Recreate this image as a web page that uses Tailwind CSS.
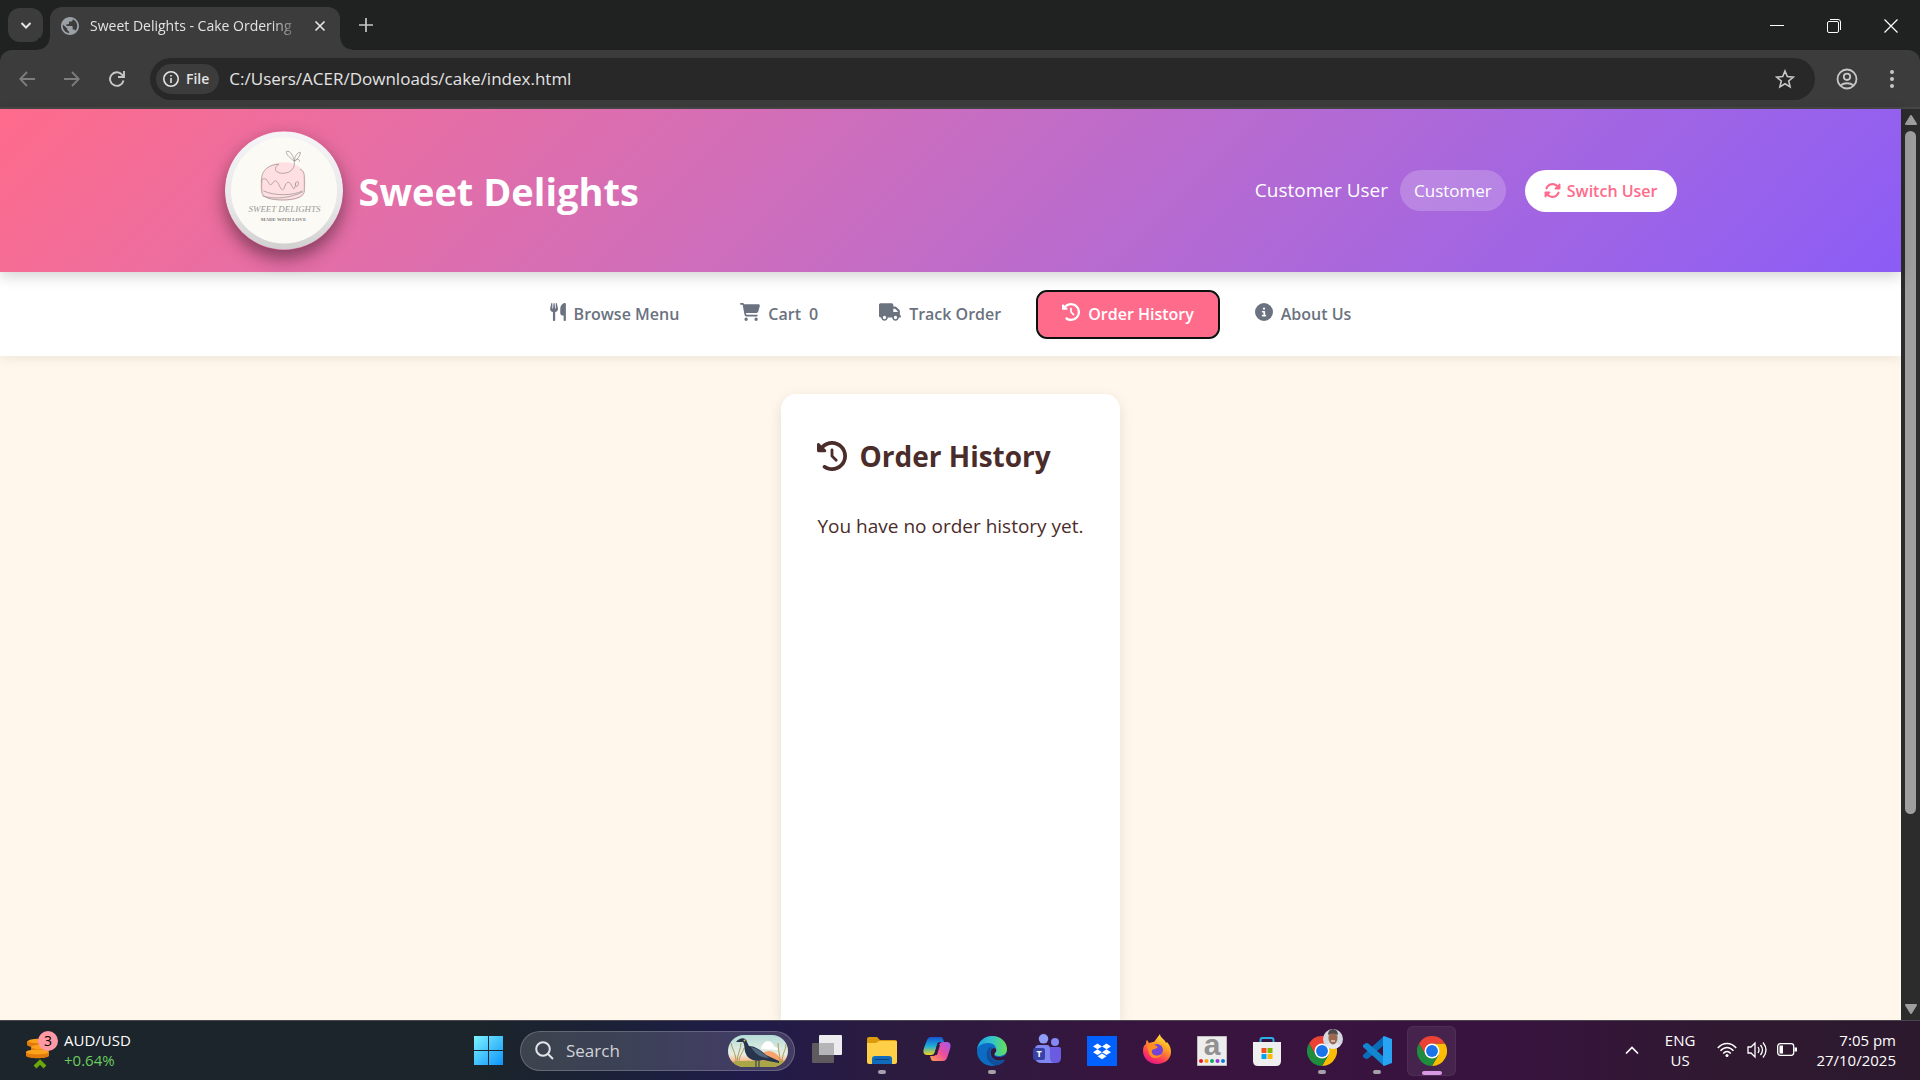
<!DOCTYPE html>
<html lang="en">
<head>
<meta charset="utf-8">
<title>Sweet Delights - Cake Ordering</title>
<script src="https://cdn.jsdelivr.net/npm/@tailwindcss/browser@4"></script>
</head>
<body class="flex h-screen flex-col overflow-hidden bg-[#202221] font-['Segoe_UI','Open_Sans',sans-serif] text-white">

<svg class="hidden" aria-hidden="true">
  <symbol id="history" viewBox="0 0 512 512"><path fill="currentColor" d="M75 75L41 41C25.9 25.9 0 36.6 0 57.9V168c0 13.3 10.7 24 24 24H134.1c21.4 0 32.1-25.9 17-41l-30.8-30.8C155 85.5 203 64 256 64c106 0 192 86 192 192s-86 192-192 192c-40.8 0-78.6-12.7-109.7-34.4c-14.5-10.1-34.4-6.6-44.6 7.9s-6.6 34.4 7.9 44.6C151.2 495 201.7 512 256 512c141.4 0 256-114.6 256-256S397.4 0 256 0C185.3 0 121.3 28.7 75 75zm181 53c-13.3 0-24 10.7-24 24V256c0 6.4 2.5 12.5 7 17l72 72c9.4 9.4 24.6 9.4 33.9 0s9.4-24.6 0-33.9l-65-65V152c0-13.3-10.7-24-24-24z"/></symbol>
  <symbol id="chrome" viewBox="0 0 48 48">
    <path fill="#fbbc04" d="M24 12H44.8A24 24 0 0 1 24 48L34.4 30z"/>
    <path fill="#ea4335" d="M3.2 12A24 24 0 0 1 44.8 12H24L13.6 30z"/>
    <path fill="#1e8e3e" d="M3.2 12L13.6 30L24 36L34.4 30L24 48A24 24 0 0 1 3.2 12z"/>
    <circle cx="24" cy="24" r="12" fill="#fff"/><circle cx="24" cy="24" r="9.5" fill="#1a73e8"/>
  </symbol>
</svg>

<!-- Tab strip -->
<div class="flex h-[50px] shrink-0 items-end pl-2">
  <button class="mb-2 flex h-[34px] w-[35px] items-center justify-center rounded-xl bg-[#3c3c3c]" aria-label="Search tabs">
    <svg class="size-3" viewBox="0 0 12 12" fill="none" stroke="#e3e3e3" stroke-width="2"><path d="M1.5 4L6 8.5L10.5 4"/></svg>
  </button>
  <div class="relative ml-[7px] flex h-[43px] w-[290px] items-center rounded-t-xl bg-[#3c3c3c] pb-1.5 pl-[11px] pr-2.5">
    <span class="absolute bottom-0 -left-3 size-3 bg-radial-[at_0_0] from-[#202221] from-[11px] to-[#3c3c3c] to-[12px]"></span>
    <span class="absolute bottom-0 -right-3 size-3 bg-radial-[at_100%_0] from-[#202221] from-[11px] to-[#3c3c3c] to-[12px]"></span>
    <svg class="size-[18px] shrink-0" viewBox="2 2 20 20"><path fill="#9aa0a6" d="M12 2C6.48 2 2 6.48 2 12s4.48 10 10 10 10-4.48 10-10S17.52 2 12 2zm-1 17.93c-3.95-.49-7-3.85-7-7.93 0-.62.08-1.21.21-1.79L9 15v1c0 1.1.9 2 2 2v1.93zm6.9-2.54c-.26-.81-1-1.39-1.9-1.39h-1v-3c0-.55-.45-1-1-1H8v-2h2c.55 0 1-.45 1-1V7h2c1.1 0 2-.9 2-2v-.41c2.93 1.19 5 4.06 5 7.41 0 2.08-.8 3.97-2.1 5.39z"/></svg>
    <span class="ml-[11px] whitespace-nowrap mask-r-from-90% mask-r-to-105% text-[14px] text-[#e3e3e3]">Sweet Delights - Cake Ordering</span>
    <button class="ml-auto p-1" aria-label="Close tab"><svg class="size-3" viewBox="0 0 12 12" stroke="#e3e3e3" stroke-width="1.7"><path d="M1.5 1.5l9 9M10.5 1.5l-9 9"/></svg></button>
  </div>
  <button class="mb-[18px] ml-[19px]" aria-label="New tab"><svg class="size-3.5" viewBox="0 0 14 14" stroke="#c7c7c7" stroke-width="1.7"><path d="M7 0v14M0 7h14"/></svg></button>
  <div class="ml-auto flex h-12 items-center">
    <button class="flex w-[58px] justify-center" aria-label="Minimize"><svg class="size-3.5" viewBox="0 0 14 14" stroke="#fff"><path d="M0 6.5h14"/></svg></button>
    <button class="flex w-[56px] justify-center" aria-label="Restore"><svg class="size-3.5" viewBox="0 0 14 14" fill="none" stroke="#fff"><rect x=".5" y="2.500" width="11" height="11" rx="1.500"/><path d="M3 .5h8a2.500 2.500 0 0 1 2.500 2.500v8"/></svg></button>
    <button class="flex w-[58px] justify-center" aria-label="Close"><svg class="size-3.5" viewBox="0 0 14 14" stroke="#fff" stroke-width="1.2"><path d="M.5.5l13 13M13.500.5l-13 13"/></svg></button>
  </div>
</div>

<!-- Toolbar -->
<div class="flex h-[59px] shrink-0 items-center rounded-t-xl border-b-2 border-[#474747] bg-[#3c3c3c] px-[19px]">
  <button aria-label="Back"><svg class="size-4" viewBox="0 0 16 16" fill="none" stroke="#7d7d7d" stroke-width="1.8"><path d="M16 8H1.5M8 1L1.200 8L8 15"/></svg></button>
  <button class="ml-[29px]" aria-label="Forward"><svg class="size-4" viewBox="0 0 16 16" fill="none" stroke="#7d7d7d" stroke-width="1.8"><path d="M0 8h14.500M8 1l6.800 7L8 15"/></svg></button>
  <button class="ml-[29px]" aria-label="Reload"><svg class="size-4" viewBox="0 0 16 16" fill="none" stroke="#c7c7c7" stroke-width="1.9"><path d="M14.500 9.500A6.800 6.800 0 1 1 13 3.600L14.800 5.500M15 0v6H9"/></svg></button>
  <div class="ml-[25px] flex h-[42px] flex-1 items-center rounded-full bg-[#282828] pl-1.5 pr-5">
    <button class="flex h-[30px] items-center gap-[7px] rounded-full bg-[#3c3c3c] pl-[7px] pr-2.5 text-[14px] font-semibold text-[#e3e3e3]">
      <svg class="size-4" viewBox="0 0 16 16" fill="none" stroke="#e3e3e3" stroke-width="1.6"><circle cx="8" cy="8" r="7.200"/><path d="M8 7v5M8 4v1.600"/></svg>File
    </button>
    <input class="ml-2.5 min-w-0 flex-1 bg-transparent text-[17px] text-[#e3e3e3] outline-none" aria-label="Address" value="C:/Users/ACER/Downloads/cake/index.html">
    <button aria-label="Bookmark"><svg class="size-5" viewBox="0 0 20 20" fill="none" stroke="#c7c7c7" stroke-width="1.6"><path d="M10 2l2.300 5.600 6 .5-4.600 3.900 1.400 5.900L10 14.800l-5.100 3.100 1.400-5.900L1.700 8.100l6-.5z"/></svg></button>
  </div>
  <button class="ml-[21px]" aria-label="Profile"><svg class="size-[22px]" viewBox="0 0 22 22" fill="none" stroke="#c7c7c7" stroke-width="1.8"><circle cx="11" cy="11" r="9.500"/><circle cx="11" cy="8.800" r="3.200"/><path d="M4.500 17.500c3.500-3 9.500-3 13 0"/></svg></button>
  <button class="ml-[25px]" aria-label="Menu"><svg class="h-5 w-[18px]" viewBox="0 0 18 20" fill="#c7c7c7"><circle cx="9" cy="3" r="2"/><circle cx="9" cy="10" r="2"/><circle cx="9" cy="17" r="2"/></svg></button>
</div>

<!-- Page -->
<div class="flex min-h-0 flex-1">
  <div class="flex min-w-0 flex-1 flex-col bg-[#fff6ec] text-[#4a2c2a]">
    <header class="relative z-10 bg-linear-135 from-[#ff6b8b] to-[#8b5cf6] px-6 py-[22px] shadow-[0_4px_14px_rgba(0,0,0,0.18)]">
      <div class="mx-auto flex max-w-[1452px] items-center text-white">
        <svg class="h-[119px] w-[118px] rounded-full shadow-[0_8px_18px_rgba(0,0,0,0.45)]" viewBox="0 0 119 119" role="img" aria-label="Sweet Delights logo">
          <defs><linearGradient id="rim" x1="0" y1="0" x2="0" y2="1"><stop offset="0" stop-color="#f5f5f7"/><stop offset=".6" stop-color="#e8e8ea"/><stop offset="1" stop-color="#d0d0d0"/></linearGradient></defs>
          <circle cx="59.5" cy="59.5" r="59.5" fill="url(#rim)"/>
          <circle cx="59.5" cy="59.5" r="53.5" fill="#fbfaf5"/>
          <path fill="#ffdfe2" d="M38 43c2-8 12-12 22-12 12 0 20 7 21 16 1 6 0 12-2 17-4 7-30 8-40 1-5-6-4-15-1-22z"/>
          <g fill="none" stroke="#a39797" stroke-width=".8" stroke-linecap="round">
            <path d="M54 33c-9 0-17 6-17 14v13c0 7 9 9 21 9s22-3 22-9V46c0-4-1-7-4-8M39 60c10 5 30 5 39 0M38 65c11 4 29 2 40-4"/>
            <path d="M37 51c-2-3 4-5 6-1s3 5 5 2 4-3 6 1 4 9 6 3 5-6 7-2 3 6 4 0c0-4 4-5 3-1s-3 3-3-1"/>
            <path d="M54 33c-5 3-4 8 2 9 8 1 15-3 14-12M70 30c-4-3-9-7-8-10 4-1 7 5 8 10 0-5 3-9 6-9 0 3-2 6-6 9 3-3 6-2 5 0"/>
          </g>
          <text x="60" y="81" text-anchor="middle" class="fill-[#9a9a9a] font-['Liberation_Serif',serif] text-[9px] italic">SWEET DELIGHTS</text>
          <text x="59" y="90" text-anchor="middle" class="fill-[#808080] font-['Liberation_Serif',serif] text-[5px] font-bold">MADE WITH LOVE</text>
        </svg>
        <h1 class="ml-4 text-[38px] leading-none font-bold">Sweet Delights</h1>
        <div class="ml-auto flex items-center">
          <span class="text-[19px]">Customer User</span>
          <span class="ml-3 flex h-[41px] items-center rounded-full bg-white/20 px-3.5 text-[17px]">Customer</span>
          <button class="ml-[19px] flex h-[42px] items-center gap-1.5 rounded-full bg-white px-[19px] text-[16px] font-semibold text-[#ff6b8b]">
            <svg class="size-[17px]" viewBox="0 0 512 512" fill="currentColor"><path d="M142.900 142.900c62.200-62.200 162.700-62.500 225.300-1L327 183c-6.900 6.900-8.900 17.200-5.200 26.200s12.500 14.800 22.200 14.800H472c13.300 0 24-10.700 24-24V72c0-9.700-5.800-18.500-14.800-22.200s-19.300-1.700-26.200 5.200L413.400 96.600c-87.600-86.500-228.700-86.200-315.800 1C73.200 122 55.600 150.700 44.800 181.400c-5.900 16.700 2.900 34.900 19.500 40.800s34.900-2.900 40.800-19.500c7.700-21.800 20.200-42.300 37.800-59.800zM16 312V440c0 9.700 5.800 18.500 14.800 22.200s19.300 1.700 26.200-5.200l41.600-41.600c87.600 86.500 228.700 86.200 315.800-1c24.400-24.400 42.100-53.100 52.900-83.700c5.900-16.700-2.900-34.900-19.500-40.800s-34.900 2.900-40.800 19.500c-7.700 21.800-20.200 42.300-37.800 59.800c-62.200 62.200-162.700 62.500-225.300 1L185 329c6.900-6.900 8.900-17.200 5.200-26.200s-12.500-14.800-22.200-14.800H40c-13.300 0-24 10.700-24 24z"/></svg>
            Switch User
          </button>
        </div>
      </div>
    </header>

    <nav class="flex h-[84px] shrink-0 items-center justify-center gap-[13px] bg-white text-[16px] font-semibold text-[#6b7280] shadow-[0_2px_12px_rgba(0,0,0,0.08)]">
      <button class="flex h-[45px] items-center gap-2 px-6">
        <svg class="mb-1 h-[18px] w-4" viewBox="0 0 448 512" fill="currentColor"><path d="M416 0C400 0 288 32 288 176V288c0 35.300 28.700 64 64 64h32V480c0 17.700 14.300 32 32 32s32-14.300 32-32V32c0-17.700-14.300-32-32-32zM64 16C64 7.800 57.900 1 49.700 .1S34.200 4.600 32.400 12.500L2.100 148.800C.7 155.100 0 161.500 0 167.900c0 45.900 35.100 83.600 80 87.700V480c0 17.700 14.300 32 32 32s32-14.300 32-32V255.600c44.900-4.100 80-41.800 80-87.700c0-6.400-.7-12.800-2.100-19.100L191.600 12.500c-1.800-8-9.300-13.300-17.400-12.400S160 7.800 160 16V150.200c0 5.400-4.400 9.800-9.800 9.800c-5.100 0-9.300-3.900-9.800-9L127.900 14.600C127.200 6.300 120.300 0 112 0s-15.200 6.300-15.900 14.600L83.700 151c-.5 5.100-4.700 9-9.800 9c-5.400 0-9.800-4.400-9.800-9.800V16z"/></svg>
        Browse Menu
      </button>
      <button class="flex h-[45px] items-center gap-2 px-6">
        <svg class="mb-1 h-[18px] w-5" viewBox="0 0 576 512" fill="currentColor"><path d="M0 24C0 10.700 10.700 0 24 0H69.500c22 0 41.500 12.800 50.600 32h411c26.300 0 45.500 25 38.600 50.400l-41 152.300c-8.500 31.400-37 53.300-69.500 53.300H170.700l5.400 28.500c2.200 11.300 12.100 19.500 23.600 19.500H488c13.300 0 24 10.700 24 24s-10.700 24-24 24H199.700c-34.600 0-64.300-24.600-70.700-58.500L77.400 54.500c-.7-3.800-4-6.500-7.900-6.500H24C10.700 48 0 37.300 0 24zM128 464a48 48 0 1 1 96 0 48 48 0 1 1 -96 0zm336-48a48 48 0 1 1 0 96 48 48 0 1 1 0-96z"/></svg>
        Cart <span>0</span>
      </button>
      <button class="flex h-[45px] items-center gap-2 px-6">
        <svg class="mb-1 h-[18px] w-[22px]" viewBox="0 0 640 512" fill="currentColor"><path d="M48 0C21.500 0 0 21.500 0 48V368c0 26.500 21.500 48 48 48H64c0 53 43 96 96 96s96-43 96-96H384c0 53 43 96 96 96s96-43 96-96h32c17.700 0 32-14.300 32-32s-14.300-32-32-32V237.300c0-17-6.700-33.300-18.700-45.300L512 114.700c-12-12-28.300-18.700-45.300-18.700H416V48c0-26.500-21.500-48-48-48H48zM416 160h50.700L544 237.300V256H416V160zM112 416a48 48 0 1 1 96 0 48 48 0 1 1 -96 0zm368-48a48 48 0 1 1 0 96 48 48 0 1 1 0-96z"/></svg>
        Track Order
      </button>
      <button class="flex h-[45px] items-center gap-2 rounded-[9px] bg-[#ff6b8b] px-6 text-white outline-2 outline-[#101010]">
        <svg class="mb-1 size-[18px]"><use href="#history"/></svg>
        Order History
      </button>
      <button class="flex h-[45px] items-center gap-2 px-6">
        <svg class="mb-1 size-[18px]" viewBox="0 0 512 512" fill="currentColor"><path d="M256 512A256 256 0 1 0 256 0a256 256 0 1 0 0 512zM216 336h24V272H216c-13.300 0-24-10.700-24-24s10.700-24 24-24h48c13.300 0 24 10.700 24 24v88h8c13.300 0 24 10.700 24 24s-10.700 24-24 24H216c-13.300 0-24-10.700-24-24s10.700-24 24-24zm40-208a32 32 0 1 1 0 64 32 32 0 1 1 0-64z"/></svg>
        About Us
      </button>
    </nav>

    <main class="flex min-h-0 flex-1 justify-center pt-[38px]">
      <section class="rounded-t-[15px] bg-white px-9 pt-[38px] shadow-[0_4px_14px_rgba(0,0,0,0.1)]">
        <h2 class="flex h-12 items-center gap-3 text-[28px] font-bold"><svg class="size-[30px]"><use href="#history"/></svg>Order History</h2>
        <p class="mt-8 text-[19px]">You have no order history yet.</p>
      </section>
    </main>
  </div>
  <!-- Scroll bar -->
  <div class="flex w-[19px] shrink-0 flex-col items-center bg-[#2c2c2c] py-1.5">
    <svg class="h-2.5 w-3" viewBox="0 0 12 10" fill="#9f9f9f" stroke="#9f9f9f" stroke-linejoin="round" stroke-width="2"><path d="M6 1l5 8H1z"/></svg>
    <div class="mt-1.5 mb-2 min-h-0 flex-1"><div class="h-[79%] w-[11px] rounded-full bg-[#9f9f9f]"></div></div>
    <svg class="h-2.5 w-3" viewBox="0 0 12 10" fill="#9f9f9f" stroke="#9f9f9f" stroke-linejoin="round" stroke-width="2"><path d="M6 9l5-8H1z"/></svg>
  </div>
</div>

<!-- Taskbar -->
<footer class="grid h-[60px] shrink-0 grid-cols-[1fr_auto_1fr] items-center border-t border-[#4b4750] bg-[linear-gradient(to_right,#1b252b_0%,#1b252b_25%,#1b2138_32%,#201b4a_39%,#2c1b3e_47%,#38143f_60%,#38133f_78%,#2f1930_90%,#2c192e_100%)]">
  <button class="flex items-center gap-1.5 justify-self-start pb-0.5 pl-[26px] text-left">
    <svg class="h-[38px] w-8" viewBox="0 0 32 38" role="img" aria-label="3 alerts">
      <g fill="#e07a0a"><path d="M1 10v4c2 3 15 3 20 0v-4z"/><path d="M5 16v4c2 3 15 3 18 0v-4z"/><path d="M0 21v4c2 3 21 3 23 0v-4z"/></g>
      <g fill="#fba11b"><ellipse cx="12" cy="10" rx="10" ry="2.200"/><ellipse cx="14" cy="16" rx="9" ry="2.200"/><ellipse cx="11.500" cy="21" rx="11.500" ry="2.500"/></g>
      <path d="M9 36l5-5 5 5" fill="none" stroke="#6aa80e" stroke-width="4"/>
      <circle cx="22" cy="10" r="10" fill="#ff99a4"/><text x="22" y="15" text-anchor="middle" class="fill-black text-[14px]">3</text>
    </svg>
    <span class="text-[15px] leading-5">AUD/USD<br><span class="text-[#6ccb5f]">+0.64%</span></span>
  </button>

  <div class="flex h-full items-center">
    <button class="flex w-[55px] justify-center" aria-label="Start"><svg class="size-[29px]" viewBox="0 0 29 29"><defs><linearGradient id="win" x1="0" y1="0" x2="1" y2="1"><stop stop-color="#7df3ff"/><stop offset="1" stop-color="#0c93fb"/></linearGradient></defs><path fill="url(#win)" d="M0 0h14v14H0zM15 0h14v14H15zM0 15h14v14H0zM15 15h14v14H15z"/></svg></button>
    <label class="mx-1 flex h-10 w-[275px] items-center rounded-full border border-white/20 bg-white/15 pl-3.5 pr-1.5">
      <svg class="size-[19px]" viewBox="0 0 19 19" fill="none" stroke="#e4e4e8" stroke-width="2"><circle cx="8" cy="8" r="6.800"/><path d="M13 13l5 5"/></svg>
      <input class="ml-3 w-0 min-w-0 flex-1 bg-transparent text-[17px] outline-none placeholder:text-[#d2d2d8]" placeholder="Search" aria-label="Search">
      <svg class="h-8 w-[60px] rounded-[16px]" viewBox="0 0 60 32">
        <defs><linearGradient id="sky" x1="0" y1="0" x2="0" y2="1"><stop stop-color="#b5dcd8"/><stop offset=".6" stop-color="#e8eee4"/><stop offset=".85" stop-color="#ffb080"/></linearGradient></defs>
        <rect width="60" height="32" fill="url(#sky)"/><path fill="#fff" d="M33 14c0-4 4-8 7-8s5 3 6 5 5 1 6 4z"/><path fill="#f8a36c" d="M34 19c6-6 14-2 18 4l6 4H30z"/>
        <path fill="#aaa546" d="M0 27c15-2 40-1 60-1v6H0z"/>
        <g fill="none" stroke="#a99c58" stroke-width="1"><path d="M8 27C8 18 4 14 3 8M9 27c0-8 4-12 4-19M11 27c0-7 4-9 5-14M52 27c0-8-2-12-2-19M54 27c0-8 4-12 4-18"/></g>
        <path fill="#26354c" d="M8 7c4-5 10-5 11 0l2 4c6 0 13 5 17 9l13 6v2l-16-3c-9 2-15-1-17-6-2-4-1-9-3-12z"/>
        <path fill="#4f667d" d="M23 12c7 1 12 6 18 11-8 0-14-4-18-11z"/><path d="M28 24v8M31 24v8" stroke="#26354c"/><circle cx="16.500" cy="5.500" r=".9" fill="#e6b73c"/>
      </svg>
    </label>
    <button class="flex w-[55px] justify-center pb-1" aria-label="Task view"><svg class="h-7 w-[30px]" viewBox="0 0 30 28"><rect y="8" width="22" height="20" rx="1" fill="#5d5b60"/><rect x="7" width="23" height="20" rx="1" fill="#ececee"/><path fill="#b5b5b7" d="M7 8h15v12H7z"/></svg></button>
    <button class="relative flex h-full w-[55px] items-center justify-center" aria-label="File Explorer"><svg class="h-[27px] w-[30px]" viewBox="0 0 30 27"><path fill="#dc9b0c" d="M0 2q0-2 2-2h8l3 3h15q2 0 2 2v6H0z"/><path fill="#ffcf48" d="M0 6h9l3-2h17q1 0 1 1v20q0 2-2 2H2q-2 0-2-2z"/><path fill="#0f6cbd" d="M5 27v-5q0-3 3-3h14q3 0 3 3v5z"/><path stroke="#073f7c" d="M8 22.500h14"/></svg><i class="absolute bottom-1.5 h-1 w-2 rounded-full bg-[#a5a0aa]"></i></button>
    <button class="flex w-[55px] justify-center pb-1" aria-label="Copilot"><svg class="size-7" viewBox="0 0 28 28"><defs><linearGradient id="cpa" x1="0" y1="0" x2="0" y2="1"><stop stop-color="#1555d4"/><stop offset=".5" stop-color="#1cabd8"/><stop offset="1" stop-color="#f3d21c"/></linearGradient><linearGradient id="cpb" x1="1" y1="0" x2="0" y2="1"><stop stop-color="#a05af0"/><stop offset=".5" stop-color="#ee4c9c"/><stop offset="1" stop-color="#ffa04d"/></linearGradient></defs><path fill="url(#cpa)" d="M8 2h9c3 0 3 2 4 5h-4c-2 0-3 1-3 3l-2 7c-1 2-2 3-4 3H4c-4 0-4-4-3-7l3-8c1-2 2-3 4-3z"/><path fill="url(#cpb)" d="M20 26h-9c-3 0-3-2-4-5h3c2 0 3-1 4-3l2-8c1-2 2-3 4-3h4c4 0 4 4 3 7l-3 9c-1 2-2 3-4 3z"/><path fill="#301a40" d="M14 10h3l-3 10h-3z"/></svg></button>
    <button class="relative flex h-full w-[55px] items-center justify-center" aria-label="Edge"><svg class="size-[30px]" viewBox="0 0 30 30"><defs><linearGradient id="ed" x1="0" y1="0" x2="1" y2="0"><stop stop-color="#1ca2e2"/><stop offset=".5" stop-color="#34c4cc"/><stop offset="1" stop-color="#68e04f"/></linearGradient></defs><circle cx="15" cy="15" r="15" fill="#0c6cc4"/><path fill="url(#ed)" d="M0 14C1 5 8 0 15 0c9 0 15 6 15 13 0 5-4 7-8 7-3 0-5-1-5-2s2-2 2-5c0-4-4-6-8-6-6 0-10 3-11 7z"/><path fill="#114f9c" d="M13 11c-6 5-4 15 4 18 5 1 9-1 11-5-7 3-14 0-15-5-1-3 0-6 3-7z"/><path fill="#341741" d="M17 12c4 1 2 4 1 5-2 3 1 4 4 4 4 0 7-2 8-5v6c-7 5-15 2-16-3-1-4 0-6 3-7z"/></svg><i class="absolute bottom-1.5 h-1 w-2 rounded-full bg-[#a5a0aa]"></i></button>
    <button class="flex w-[55px] justify-center pb-1" aria-label="Teams"><svg class="h-[30px] w-7" viewBox="0 0 28 30"><circle cx="22" cy="8" r="4" fill="#8489f5"/><circle cx="10.500" cy="4.800" r="4.800" fill="#8e9df8"/><path fill="#6a5be0" d="M17 13h9q2 0 2 2v9q0 5-5 5h-7z"/><path fill="#7f86f2" d="M2 15q0-4 4-4h8q3 0 3 4v9q0 3 3 5H9q-7 0-7-6z"/><rect y="14" width="12" height="12" rx="2" fill="#3940a6"/><text x="6" y="23" text-anchor="middle" class="fill-white text-[9px] font-bold">T</text></svg></button>
    <button class="flex w-[55px] justify-center" aria-label="Dropbox"><svg class="size-[30px]" viewBox="0 0 30 30"><path fill="#0061fe" d="M0 0h30v30H0z"/><path fill="#fff" d="M10.500 7.500L15 10.400l-4.500 2.900L6 10.400zM19.500 7.500l4.500 2.900-4.500 2.900-4.500-2.900zM10.500 13.300l4.500 2.900-4.500 2.900L6 16.200zM19.500 13.300l4.500 2.900-4.500 2.900-4.500-2.900zM15 17.400l4.500 2.900-4.500 2.900-4.500-2.900z"/></svg></button>
    <button class="flex w-[55px] justify-center pb-1" aria-label="Firefox"><svg class="size-[30px]" viewBox="0 0 30 30"><defs><linearGradient id="ff" x1=".8" y1="0" x2=".3" y2="1"><stop stop-color="#fff04a"/><stop offset=".4" stop-color="#ffa021"/><stop offset=".75" stop-color="#ff3d58"/><stop offset="1" stop-color="#e31587"/></linearGradient></defs><path fill="url(#ff)" d="M5 6l2 3 4-1c2 0 2-2 4-4l3-4c0 4 5 5 6 9l1-1c3 3 4 7 4 10 0 7-6 12-14 12S1 24 1 17c0-4 1-6 3-7 0-2 0-3 1-4z"/><circle cx="15" cy="16" r="6" fill="#7444d8"/><path fill="#ff8e21" d="M5 11c4-1 8-1 11 2-2 2-5 2-6 3-1 6 5 7 10 4-2 5-10 6-13 0-1-3-1-6-2-9z"/></svg></button>
    <button class="flex w-[55px] justify-center" aria-label="Amazon"><svg class="size-[30px] overflow-visible" viewBox="0 0 30 30"><path fill="#ededed" stroke="#bcbcbc" d="M.5.5h29v29H.5z"/><text x="15" y="19" text-anchor="middle" class="fill-[#919191] font-['Liberation_Sans',sans-serif] text-[30px] font-bold">a</text><circle cx="4" cy="25" r="2" fill="#f01818"/><circle cx="9.500" cy="25" r="2" fill="#ffa21a"/><circle cx="15" cy="25" r="2" fill="#10aa60"/><circle cx="20.500" cy="25" r="2" fill="#9135d8"/><circle cx="26" cy="25" r="2" fill="#087cdc"/></svg></button>
    <button class="flex w-[55px] justify-center" aria-label="Microsoft Store"><svg class="size-[30px]" viewBox="0 0 30 30"><path d="M8.500 7V4q0-2 2-2h9q2 0 2 2v3" fill="none" stroke="#2bafea" stroke-width="2"/><path fill="#efeff0" d="M1 6h28v19q0 5-5 5H6q-5 0-5-5z"/><path fill="#f25022" d="M9.500 12h5v5h-5z"/><path fill="#7fba00" d="M15.500 12h5v5h-5z"/><path fill="#00a4ef" d="M9.500 18h5v5h-5z"/><path fill="#ffb900" d="M15.500 18h5v5h-5z"/></svg></button>
    <button class="relative flex h-full w-[55px] items-center justify-center" aria-label="Chrome, profile"><svg class="size-[30px]"><use href="#chrome"/></svg>
      <svg class="absolute top-2 right-1.5 size-5 rounded-full" viewBox="0 0 20 20"><path fill="#d5d8df" d="M0 0h20v20H0z"/><path fill="#e6e8ee" d="M2 20c0-5 4-6 8-6s8 1 8 6z"/><ellipse cx="10" cy="9" rx="4.500" ry="6.500" fill="#9c6950"/><path fill="#4c4b50" d="M5 6c0-8 10-8 10 0-3-2-7-2-10 0z"/><path d="M8 12h4" stroke="#fff"/></svg>
      <i class="absolute bottom-1.5 h-1 w-2 rounded-full bg-[#a5a0aa]"></i></button>
    <button class="relative flex h-full w-[55px] items-center justify-center" aria-label="Visual Studio Code"><svg class="size-[30px]" viewBox="0 0 30 30"><path fill="#0b6dba" d="M22 0L1 19v2l3 2 2-.2L22 9z"/><path fill="#1286cf" d="M22 30L1 11V9l3-2 2 .2L22 21z"/><path fill="#28a4f2" d="M22 0l8 3v24l-8 3-1-1V1z"/></svg><i class="absolute bottom-1.5 h-1 w-2 rounded-full bg-[#a5a0aa]"></i></button>
    <button class="relative mx-[3px] flex h-[50px] w-[49px] items-center justify-center rounded-md border border-white/5 bg-white/7" aria-label="Chrome"><svg class="size-[30px]"><use href="#chrome"/></svg><i class="absolute bottom-0 h-1 w-5 rounded-full bg-[#d998e2]"></i></button>
  </div>

  <div class="flex items-center justify-self-end pb-0.5 pr-6 text-[15px] leading-5">
    <button aria-label="Hidden icons"><svg class="h-2 w-3.5" viewBox="0 0 14 8" fill="none" stroke="#fff" stroke-width="1.6"><path d="M1 7.500l6-6 6 6"/></svg></button>
    <button class="ml-[26px] text-center">ENG<br>US</button>
    <button class="ml-[22px] flex items-center gap-2.5" aria-label="Network, volume, battery">
      <svg class="h-4 w-5" viewBox="0 0 20 16" fill="none" stroke="#fff" stroke-width="1.5"><path d="M.8 6c5-6 13.400-6 18.400 0M3.500 8.800c4-4.500 9-4.500 13 0M6.200 11.500c2.400-2.800 5.200-2.800 7.600 0"/><circle cx="10" cy="13.500" r="1.500" fill="#fff" stroke="none"/></svg>
      <svg class="h-[18px] w-5" viewBox="0 0 20 18" fill="none" stroke="#fff" stroke-width="1.3"><path d="M1 6h3l4-4v14l-4-4H1zM11 6q2 3 0 6M13.500 4q4 5 0 10M16 1.500q6 7.500 0 15"/></svg>
      <svg class="h-[13px] w-5" viewBox="0 0 20 13" fill="none" stroke="#fff" stroke-width="1.3"><rect x=".7" y=".7" width="16" height="11.600" rx="2.500"/><path fill="#fff" stroke="none" d="M2.500 2.500H6v8H2.500zM17.500 4.500H20v4h-2.500z"/></svg>
    </button>
    <button class="ml-[19px] text-right">7:05 pm<br>27/10/2025</button>
  </div>
</footer>
</body>
</html>
